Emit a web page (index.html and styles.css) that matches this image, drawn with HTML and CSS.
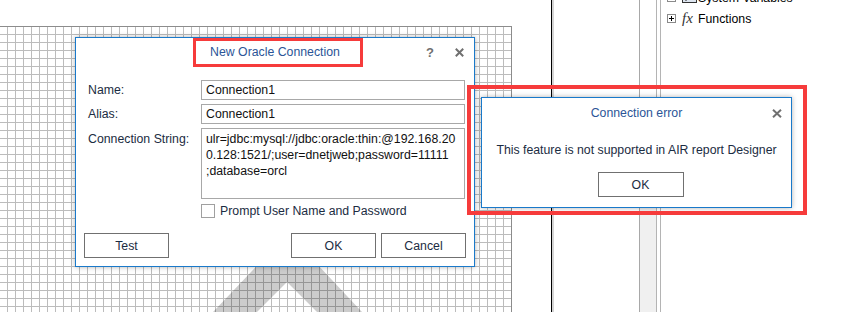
FILE: index.html
```html
<!DOCTYPE html>
<html lang="en">
<head>
  <meta charset="UTF-8">
  <title>New Oracle Connection</title>
  <link rel="stylesheet" href="styles.css">
</head>
<body>
  <div class="workspace">
    <div class="designer">
      <div class="grid"></div>
      <svg class="mark" viewBox="0 0 512 312" width="512" height="312">
        <polygon points="213,312 288,233 362,312 317,312 287,282 257,312" />
      </svg>
    </div>
    <div class="splitter"></div>
    <div class="props"></div>
    <div class="track"></div>
    <div class="rail"></div>
    <ul class="tree">
      <li>
        <svg class="expander" viewBox="0 0 9 9" width="9" height="9"><rect x="0.5" y="0.5" width="8" height="8" /><path d="M2 4.5H7M4.5 2V7" /></svg>
        <span class="node-icon">
          <svg viewBox="0 0 15 11" width="15" height="11"><rect x="0.5" y="0.5" width="14" height="10" fill="#dde5f0" stroke="#333" /><path d="M3 6h3M8 6h4M3 8h2" stroke="#222" /></svg>
        </span>
        System Variables
      </li>
      <li>
        <svg class="expander" viewBox="0 0 9 9" width="9" height="9"><rect x="0.5" y="0.5" width="8" height="8" /><path d="M2 4.5H7M4.5 2V7" /></svg>
        <span class="node-icon fx">fx</span>
        Functions
      </li>
    </ul>
  </div>

  <div class="dialog conn">
    <div class="titlebar">
      <h1>New Oracle Connection</h1>
      <div class="controls">
        <span class="help">?</span>
        <svg class="close" viewBox="0 0 9 9" width="9" height="9"><path d="M0.8 0.8L8.2 8.2M8.2 0.8L0.8 8.2" /></svg>
      </div>
    </div>

    <div class="form">
      <label>Name:</label>
      <div class="field">Connection1</div>

      <label>Alias:</label>
      <div class="field">Connection1</div>

      <label class="top">Connection String:</label>
      <div class="field area">ulr=jdbc:mysql://jdbc:oracle:thin:@192.168.20<br>0.128:1521/;user=dnetjweb;password=11111<br>;database=orcl</div>

      <div class="check-row">
        <span class="checkbox"></span>
        <span>Prompt User Name and Password</span>
      </div>
    </div>

    <div class="buttons">
      <button>Test</button>
      <button class="push">OK</button>
      <button>Cancel</button>
    </div>
  </div>

  <div class="dialog error">
    <div class="titlebar">
      <h1>Connection error</h1>
      <div class="controls">
        <svg class="close" viewBox="0 0 10 9" width="10" height="9"><path d="M1 0.8L9 8.2M9 0.8L1 8.2" /></svg>
      </div>
    </div>
    <p class="message">This feature is not supported in AIR report Designer</p>
    <div class="buttons center">
      <button class="wide">OK</button>
    </div>
  </div>

  <div class="note note-title"></div>
  <div class="note note-error"></div>
</body>
</html>
```

FILE: styles.css
```css
* { margin: 0; padding: 0; box-sizing: border-box; }
body { font-family: "Liberation Sans", Arial, sans-serif; font-size: 12.3px; color: #1b2c42; background: #fff; width: 867px; height: 312px; overflow: hidden; position: relative; }

/* background: report designer */
.workspace { display: flex; height: 312px; }
.designer { position: relative; width: 512px; flex-shrink: 0; margin-right: 39px; padding-top: 26px; }
.grid { height: 100%; border-top: 1px solid #8c8c8c; border-right: 1px solid #8c8c8c; background-image: linear-gradient(to right, #bcbcbc 1px, transparent 1px), linear-gradient(to bottom, #bcbcbc 1px, transparent 1px); background-size: 8px 8px; background-position: 7px 7px; }
.mark { position: absolute; left: 0; top: 0; }
.mark polygon { fill: rgba(0,0,0,0.2); }
.splitter { width: 3px; flex-shrink: 0; border-left: 1px solid #000; background: #d4d4d4; }
.props { width: 86px; flex-shrink: 0; border-right: 1px solid #a8a8a8; }
.track { width: 16px; flex-shrink: 0; background: linear-gradient(#fff 150px, #f0f0f0 150px); }
.rail { width: 5px; flex-shrink: 0; border-left: 1px solid #b4b4b4; border-right: 1px solid #b4b4b4; }
.tree { list-style: none; padding-left: 6px; margin-top: -13px; color: #000; }
.tree li { display: flex; align-items: center; height: 21px; white-space: nowrap; }
.expander { margin-right: 6px; }
.expander rect { fill: #fff; stroke: #8a8a8a; }
.expander path { stroke: #000; }
.node-icon { width: 16px; display: flex; align-items: center; }
.fx { font-family: "Liberation Serif", serif; font-style: italic; font-size: 15px; color: #333; }

/* dialogs */
.dialog { position: absolute; background: #fff; border: 1px solid #1979ca; box-shadow: 0 0 5px rgba(0,0,0,0.3); }
.titlebar { display: grid; grid-template-columns: 1fr auto 1fr; align-items: center; }
.titlebar h1 { grid-column: 2; font-size: 12.3px; font-weight: normal; color: #2b5597; }
.controls { grid-column: 3; justify-self: end; display: flex; align-items: center; gap: 21px; }
.help { font-size: 13px; font-weight: 700; color: #6f6f6f; }
.close path { stroke: #707070; stroke-width: 2; }

.conn { left: 75px; top: 37px; width: 400px; height: 230px; }
.conn .titlebar { height: 28px; }
.conn .controls { padding-right: 10px; }
.form { display: grid; grid-template-columns: 113px 264px; row-gap: 4px; align-items: center; padding: 14px 0 0 12px; }
.form .top { align-self: start; padding-top: 3px; line-height: 16px; }
.field { height: 20px; border: 1px solid #a8a8a8; padding: 0 4px; line-height: 18px; color: #111; }
.field.area { height: 71px; padding-top: 2px; line-height: 16px; }
.check-row { grid-column: 2; display: flex; align-items: center; gap: 5px; margin-top: 1px; }
.checkbox { width: 14px; height: 14px; border: 1px solid #a0a0a0; }

.buttons { display: flex; gap: 5px; padding: 0 8px; margin-top: 15px; }
.buttons .push { margin-left: auto; }
button { width: 85px; height: 25px; background: #fff; border: 1px solid #707070; font-family: inherit; font-size: 12.3px; color: #1b2c42; }

.error { left: 481px; top: 97px; width: 311px; height: 111px; }
.error .titlebar { height: 30px; }
.error .controls { padding-right: 9px; }
.message { text-align: center; line-height: 16px; margin-top: 14px; }
.buttons.center { justify-content: center; margin-top: 14px; padding: 0 0 0 8px; }
.buttons .wide { width: 86px; }

/* annotation boxes */
.note { position: absolute; border: 3px solid #f63b3b; }
.note-title { left: 193px; top: 38px; width: 170px; height: 29px; }
.note-error { left: 467px; top: 85px; width: 340px; height: 130px; border-width: 4px; }
```
